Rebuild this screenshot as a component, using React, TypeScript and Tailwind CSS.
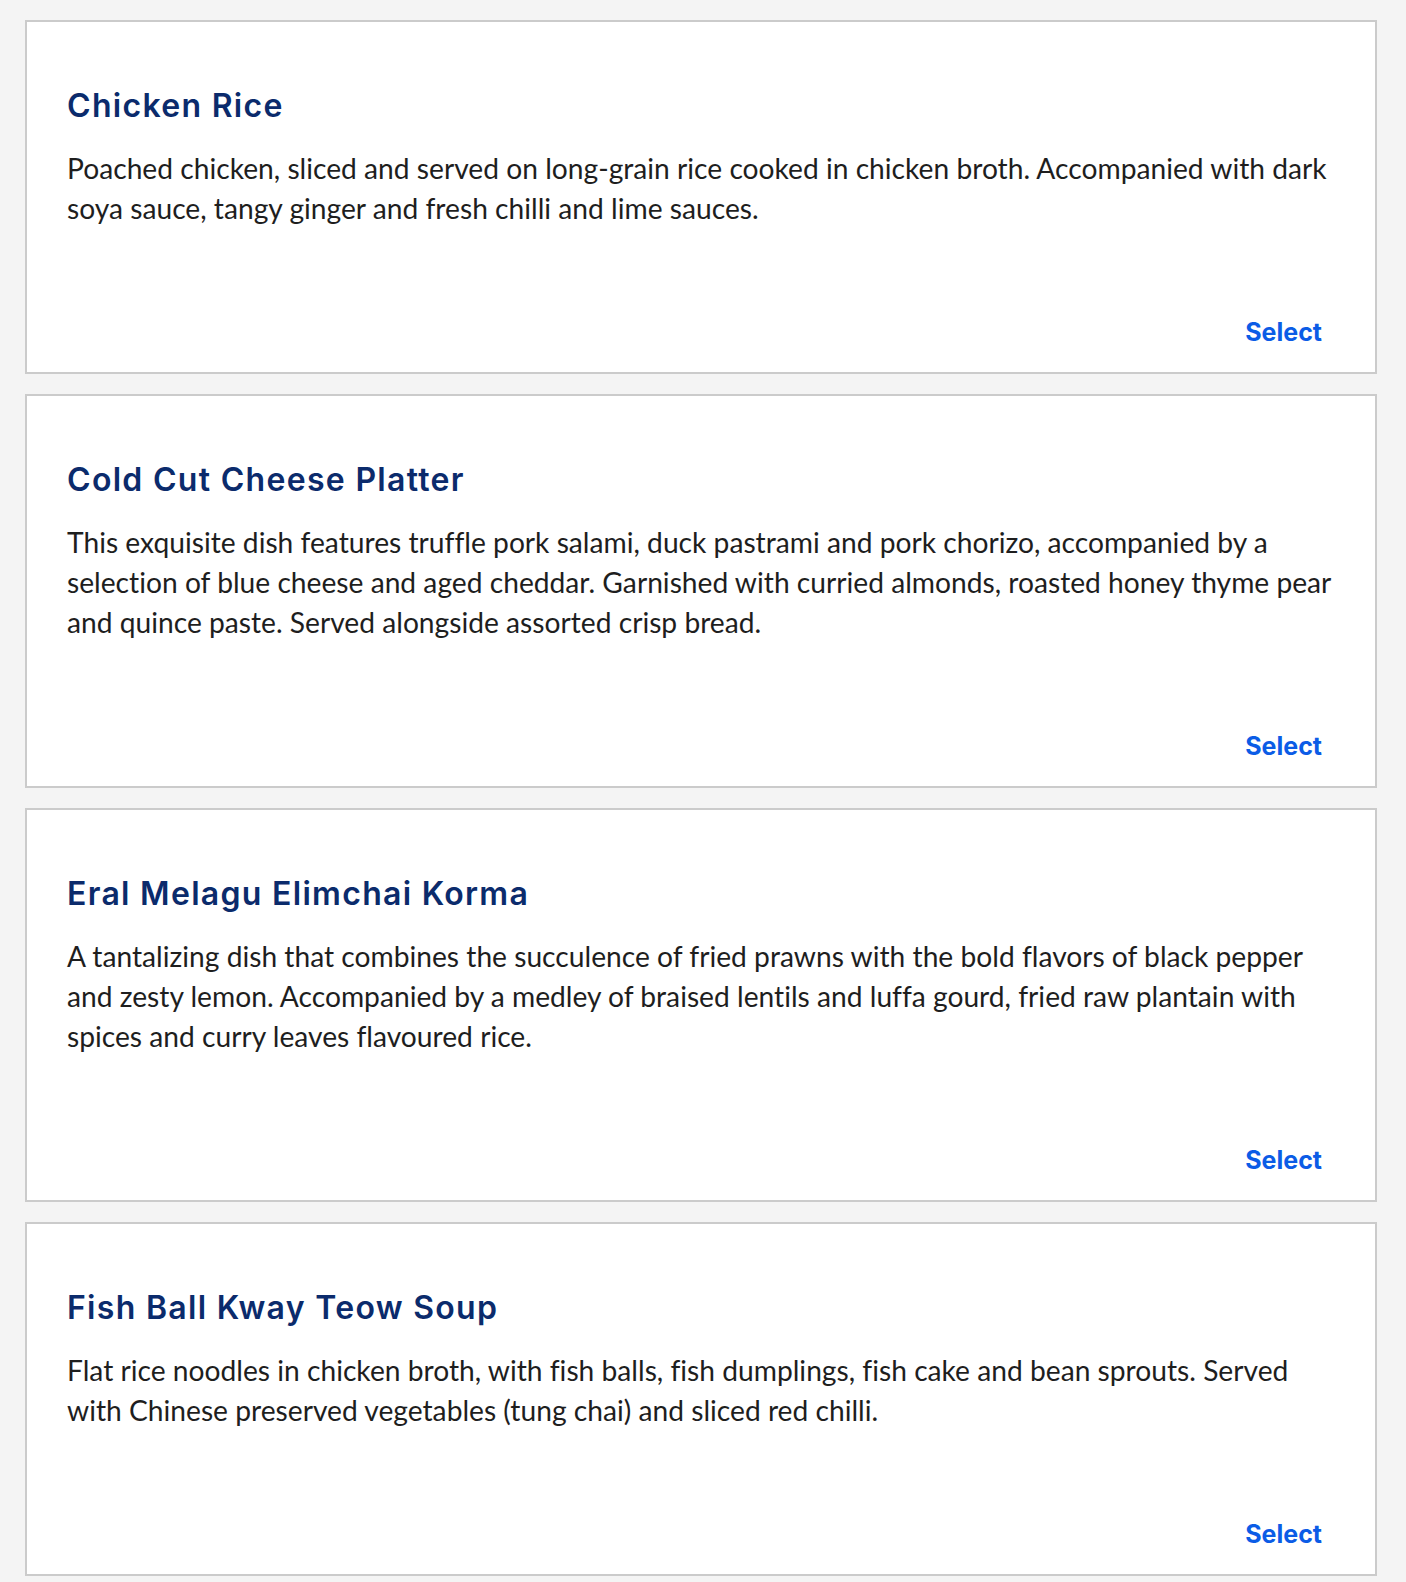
import React from "react";

type Dish = { title: string; lines: string[] };

const dishes: Dish[] = [
  {
    title: "Chicken Rice",
    lines: [
      "Poached chicken, sliced and served on long-grain rice cooked in chicken broth. Accompanied with dark",
      "soya sauce, tangy ginger and fresh chilli and lime sauces.",
    ],
  },
  {
    title: "Cold Cut Cheese Platter",
    lines: [
      "This exquisite dish features truffle pork salami, duck pastrami and pork chorizo, accompanied by a",
      "selection of blue cheese and aged cheddar. Garnished with curried almonds, roasted honey thyme pear",
      "and quince paste. Served alongside assorted crisp bread.",
    ],
  },
  {
    title: "Eral Melagu Elimchai Korma",
    lines: [
      "A tantalizing dish that combines the succulence of fried prawns with the bold flavors of black pepper",
      "and zesty lemon. Accompanied by a medley of braised lentils and luffa gourd, fried raw plantain with",
      "spices and curry leaves flavoured rice.",
    ],
  },
  {
    title: "Fish Ball Kway Teow Soup",
    lines: [
      "Flat rice noodles in chicken broth, with fish balls, fish dumplings, fish cake and bean sprouts. Served",
      "with Chinese preserved vegetables (tung chai) and sliced red chilli.",
    ],
  },
];

function DishCard({ dish }: { dish: Dish }) {
  return (
    <div className="flex flex-col border-2 border-[#cbcbcb] bg-white pt-[64px] pb-[25px] px-[40px]">
      <h3 className="font-['Inter',sans-serif] text-[32px] leading-[40px] font-semibold tracking-[1.3px] text-[#0b2b6c]">
        {dish.title}
      </h3>
      <p className="mt-[22px] font-['Lato',sans-serif] text-[28.2px] leading-[40px] text-[#1e1e1e] [font-variant-ligatures:none]">
        {dish.lines.map((l, i) => (
          <span key={i} className="block whitespace-nowrap">
            {l}
          </span>
        ))}
      </p>
      <div className="mt-[89px] flex justify-end">
        <button className="mr-[13px] font-['Inter',sans-serif] text-[25px] leading-[30px] font-bold text-[#0b5ce6]">
          Select
        </button>
      </div>
    </div>
  );
}

export default function App() {
  return (
    <div className="min-h-screen bg-[#f4f4f4] pt-[20px] pb-[20px] pl-[25px] pr-[29px]">
      <div className="flex flex-col gap-[20px]">
        {dishes.map((d) => (
          <DishCard key={d.title} dish={d} />
        ))}
      </div>
    </div>
  );
}
